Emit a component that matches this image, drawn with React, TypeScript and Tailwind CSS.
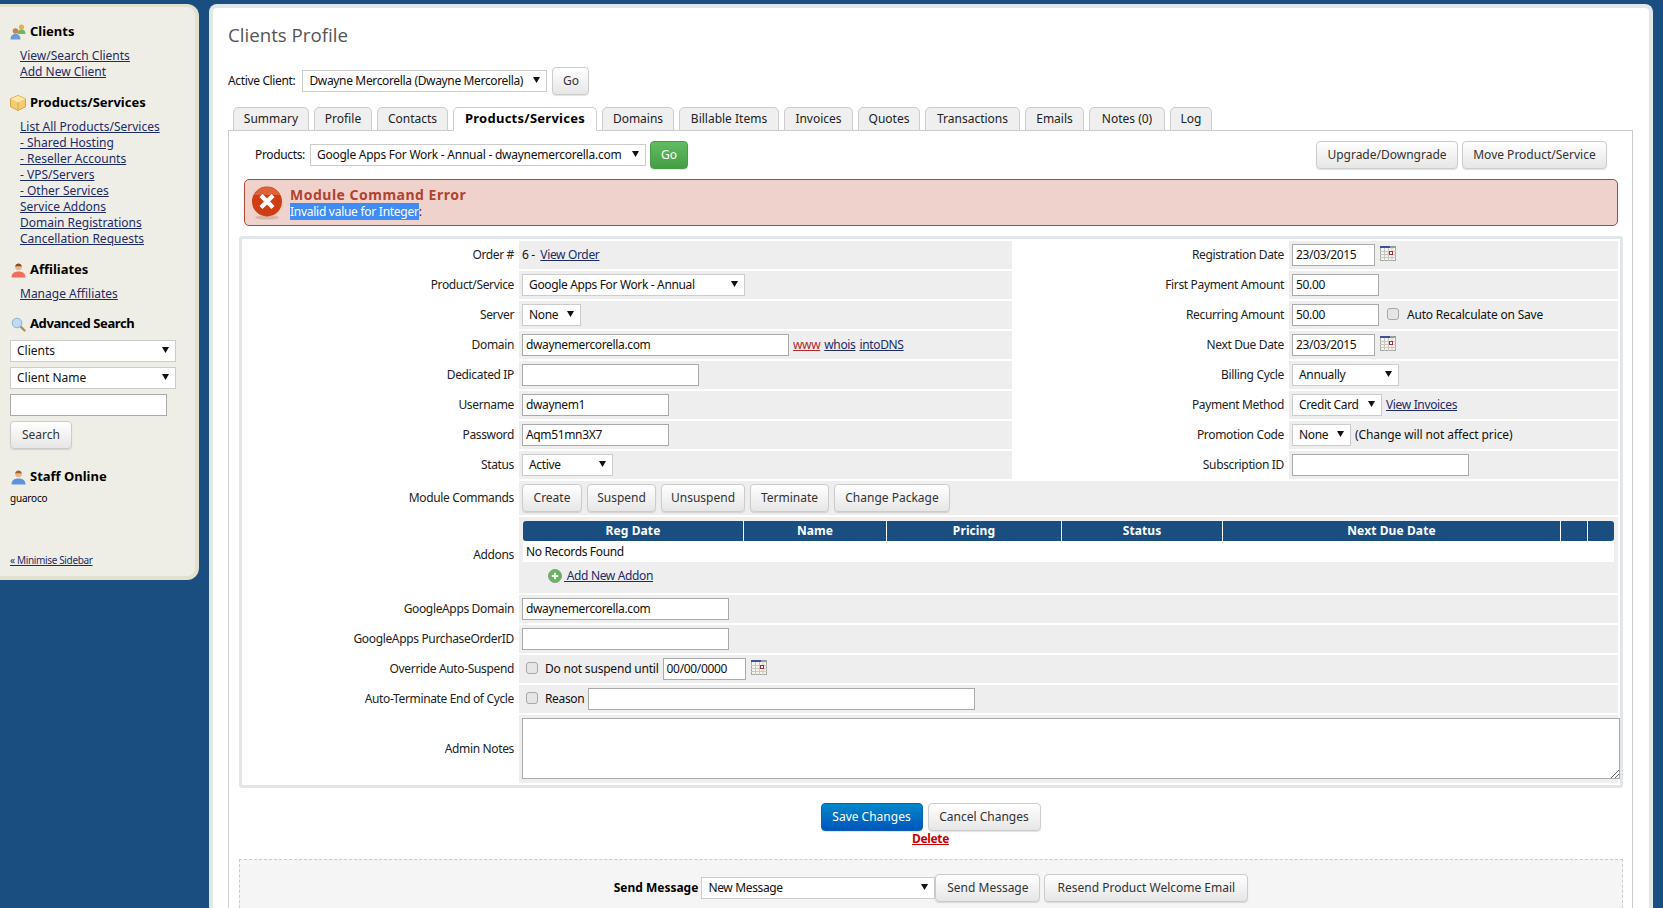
import type { ReactNode } from "react";

const LINK = "text-[#1d2b66] underline";

function Btn({ children, w, variant = "plain" }: { children: ReactNode; w: string; variant?: "plain" | "green" | "blue" }) {
  const look =
    variant === "green"
      ? "border-[#4a9a4a] bg-gradient-to-b from-[#62bd62] to-[#449d44] text-white"
      : variant === "blue"
        ? "border-[#0a5fb0] bg-gradient-to-b from-[#0088cc] to-[#0055bb] text-white"
        : "border-[#cccccc] bg-gradient-to-b from-white to-[#e6e6e6] text-[#333333]";
  return (
    <div className={`flex h-[28px] shrink-0 items-center justify-center rounded-[4px] border tracking-normal shadow-[0_1px_1px_rgba(0,0,0,0.12)] ${look} ${w}`}>
      {children}
    </div>
  );
}

function Sel({ children, w }: { children: ReactNode; w: string }) {
  return (
    <div className={`flex h-[22px] shrink-0 items-center justify-between border border-[#cccccc] bg-white pl-[6px] pr-[6px] ${w}`}>
      <span className="whitespace-nowrap">{children}</span>
      <svg width="7" height="6" viewBox="0 0 7 6" className="-mt-[2px] shrink-0">
        <path d="M0 0h7L3.5 6z" fill="#111" />
      </svg>
    </div>
  );
}

function Inp({ value = "", w }: { value?: string; w: string }) {
  return (
    <div className={`flex h-[22px] shrink-0 items-center border border-[#aaaaaa] bg-white px-[3px] ${w}`}>{value}</div>
  );
}

function Check({ className = "" }: { className?: string }) {
  return <div className={`-mt-[3px] h-[12px] w-[12px] shrink-0 rounded-[3px] border border-[#a8a8a8] bg-[#e6e6e6] ${className}`} />;
}

function Calendar() {
  return (
    <svg width="16" height="15" viewBox="0 0 16 15" className="-mt-[4px] ml-[1px] shrink-0">
      <rect x="0.5" y="0.5" width="15" height="14" fill="#f4f4ee" stroke="#a8a8a0" />
      <rect x="0" y="0" width="16" height="2" fill="#9a9a9a" />
      <rect x="0" y="0" width="10" height="2" fill="#3f4f9c" />
      <path d="M0 5.5h16M0 8.5h16M0 11.5h16M4.5 2v13M8.5 2v13M12 2v13" stroke="#c8c8c2" />
      <rect x="9.5" y="5.5" width="3" height="3" fill="#fff" stroke="#a82a3a" />
    </svg>
  );
}

function ClientsIcon() {
  return (
    <svg width="17" height="16" viewBox="0 0 17 16" className="shrink-0">
      <circle cx="11.5" cy="3" r="2.6" fill="#e8b04c" />
      <path d="M7.5 10c0-3 1.5-4.4 4-4.4s4 1.4 4 4.4z" fill="#6cb85a" />
      <circle cx="5.5" cy="7" r="2.8" fill="#c9824e" />
      <path d="M0.5 15.5c0-4 2-5.6 5-5.6s5 1.6 5 5.6z" fill="#6a9ad8" />
    </svg>
  );
}

function BoxIcon() {
  return (
    <svg width="16" height="16" viewBox="0 0 16 16" className="shrink-0">
      <path d="M8 .5l7.5 3.2v8L8 15.5.5 11.7v-8z" fill="#f3cd73" stroke="#d9a440" />
      <path d="M.8 3.8L8 7.4l7.2-3.6L8 .8z" fill="#fbe6a8" />
      <path d="M8 7.4v8" stroke="#d9a440" />
    </svg>
  );
}

function PersonIcon({ shirt, hair }: { shirt: string; hair: string }) {
  return (
    <svg width="15" height="15" viewBox="0 0 15 15" className="shrink-0">
      <circle cx="7.5" cy="4" r="3.3" fill="#e9b48c" />
      <path d="M4.2 3.6C4.4 1.4 6 .5 7.5.5s3.1.9 3.3 3.1C9 3 6 3 4.2 3.6z" fill={hair} />
      <path d="M.5 14.5c0-4 2.6-6 7-6s7 2 7 6z" fill={shirt} />
    </svg>
  );
}

function SearchIcon() {
  return (
    <svg width="15" height="15" viewBox="0 0 15 15" className="shrink-0">
      <path d="M9.5 9.5l4 4" stroke="#b88a55" strokeWidth="2.4" strokeLinecap="round" />
      <circle cx="6" cy="6" r="4.8" fill="#bcdcf5" stroke="#8fb0cf" />
    </svg>
  );
}

function ErrorIcon() {
  return (
    <svg width="32" height="34" viewBox="0 0 32 34" className="shrink-0">
      <ellipse cx="16" cy="31.5" rx="12" ry="2" fill="#d9b3aa" />
      <circle cx="16" cy="15.5" r="15" fill="#cf3d12" />
      <path d="M16 1a15 15 0 0 1 13 8H3a15 15 0 0 1 13-8z" fill="#e0623a" />
      <path d="M10 9.5l12 12M22 9.5l-12 12" stroke="#fff" strokeWidth="4.4" />
    </svg>
  );
}

function PlusIcon() {
  return (
    <svg width="14" height="14" viewBox="0 0 14 14" className="shrink-0">
      <circle cx="7" cy="7" r="6.5" fill="#62b85a" stroke="#8a9a88" />
      <path d="M7 3.8v6.4M3.8 7h6.4" stroke="#fff" strokeWidth="2" />
    </svg>
  );
}

function SideHead({ icon, children, className }: { icon: ReactNode; children: ReactNode; className: string }) {
  return (
    <div className={`flex h-[16px] items-center gap-[4px] text-[13px] font-bold text-black ${className}`}>
      <div className="flex w-[16px] justify-center">{icon}</div>
      {children}
    </div>
  );
}

function SideLinks({ items }: { items: string[] }) {
  return (
    <div className="mt-[8px] flex flex-col pl-[10px] text-[12px] leading-[16px]">
      {items.map((t) => (
        <div key={t}>
          <span className={LINK}>{t}</span>
        </div>
      ))}
    </div>
  );
}

function Sidebar() {
  return (
    <aside className="mt-[4px] flex h-[576px] w-[199px] shrink-0 flex-col rounded-r-[12px] border-t-[3px] border-r-[4px] border-b-[4px] border-[#e3e0d0] bg-[#efeee6] pl-[10px] pt-[17px]">
      <SideHead icon={<ClientsIcon />} className="">Clients</SideHead>
      <SideLinks items={["View/Search Clients", "Add New Client"]} />
      <SideHead icon={<BoxIcon />} className="mt-[15px]">Products/Services</SideHead>
      <SideLinks
        items={[
          "List All Products/Services",
          "- Shared Hosting",
          "- Reseller Accounts",
          "- VPS/Servers",
          "- Other Services",
          "Service Addons",
          "Domain Registrations",
          "Cancellation Requests",
        ]}
      />
      <SideHead icon={<PersonIcon shirt="#ef6f5e" hair="#8a4a24" />} className="mt-[15px]">Affiliates</SideHead>
      <SideLinks items={["Manage Affiliates"]} />
      <SideHead icon={<SearchIcon />} className="mt-[14px] tracking-[-0.4px]">Advanced Search</SideHead>
      <div className="mt-[8px] flex flex-col gap-[5px]">
        <Sel w="w-[166px]">Clients</Sel>
        <Sel w="w-[166px]">Client Name</Sel>
        <Inp w="w-[157px]" />
      </div>
      <div className="mt-[5px]">
        <Btn w="w-[62px]">Search</Btn>
      </div>
      <SideHead icon={<PersonIcon shirt="#5a94dc" hair="#a0622e" />} className="mt-[20px]">Staff Online</SideHead>
      <div className="mt-[6px] text-[10px] leading-[14px] tracking-[-0.2px] text-black">guaroco</div>
      <div className="mt-[48px] text-[10px] leading-[14px] tracking-[-0.35px]">
        <span className={LINK}>« Minimise Sidebar</span>
      </div>
    </aside>
  );
}

function Tab({ children, w, active }: { children: ReactNode; w: string; active?: boolean }) {
  return (
    <div
      className={`flex h-[24px] items-center justify-center rounded-t-[5px] border border-[#cccccc] ${w} ${
        active ? "border-b-white bg-white text-[13px] font-bold tracking-[0.25px] text-black" : "bg-[#efefef] text-[#222222]"
      }`}
    >
      {children}
    </div>
  );
}

function Label({ children }: { children: ReactNode }) {
  return <div className="flex items-center justify-end whitespace-nowrap pr-[3px] text-[#222222]">{children}</div>;
}

function Field({ children }: { children: ReactNode }) {
  return <div className="flex h-[28px] items-center gap-[4px] bg-[#eeeeee] pl-[3px]">{children}</div>;
}

function Row({ l, lf, r, rf }: { l: string; lf: ReactNode; r: string; rf: ReactNode }) {
  return (
    <div className="grid grid-cols-[275px_493px_273px_329px] gap-x-[2px]">
      <Label>{l}</Label>
      <Field>{lf}</Field>
      <Label>{r}</Label>
      <Field>{rf}</Field>
    </div>
  );
}

function WideRow({ l, children }: { l: string; children: ReactNode }) {
  return (
    <div className="grid grid-cols-[275px_1099px] gap-x-[2px]">
      <Label>{l}</Label>
      {children}
    </div>
  );
}

const addonCols = [
  { t: "Reg Date", w: "w-[221px]" },
  { t: "Name", w: "w-[143px]" },
  { t: "Pricing", w: "w-[175px]" },
  { t: "Status", w: "w-[161px]" },
  { t: "Next Due Date", w: "w-[338px]" },
  { t: "", w: "w-[27px]" },
  { t: "", w: "w-[26px]" },
];

const tabs = [
  { t: "Summary", w: "w-[76px]" },
  { t: "Profile", w: "w-[58px]" },
  { t: "Contacts", w: "w-[71px]" },
  { t: "Products/Services", w: "w-[144px]", active: true },
  { t: "Domains", w: "w-[72px]" },
  { t: "Billable Items", w: "w-[100px]" },
  { t: "Invoices", w: "w-[69px]" },
  { t: "Quotes", w: "w-[62px]" },
  { t: "Transactions", w: "w-[95px]" },
  { t: "Emails", w: "w-[59px]" },
  { t: "Notes (0)", w: "w-[76px]" },
  { t: "Log", w: "w-[42px]" },
];

export default function App() {
  return (
    <div className="flex h-screen overflow-hidden bg-[#1a4d80] font-['Noto_Sans',sans-serif] text-[12px] text-[#111111]">
      <Sidebar />
      <main className="ml-[10px] mr-[10px] mt-[4px] min-w-0 flex-1 rounded-t-[8px] border-x-[4px] border-t-[4px] border-[#e1e6ea] bg-white pl-[15px] pr-[16px]">
        <h1 className="mt-[15px] h-[24px] font-['Open_Sans',sans-serif] text-[18.7px] leading-[24px] text-[#555555]">Clients Profile</h1>
        <div className="mt-[20px] flex h-[28px] items-center tracking-[-0.35px]">
          <span className="mr-[7px]">Active Client:</span>
          <Sel w="w-[245px]">Dwayne Mercorella (Dwayne Mercorella)</Sel>
          <div className="ml-[5px]">
            <Btn w="w-[37px]">Go</Btn>
          </div>
        </div>
        <div className="mt-[12px] flex gap-[5px] pl-[5px]">
          {tabs.map((t) => (
            <Tab key={t.t} w={t.w} active={t.active}>
              {t.t}
            </Tab>
          ))}
        </div>
        <section className="-mt-px border border-[#cccccc] pb-[20px] pt-[10px] tracking-[-0.35px]">
          <div className="flex h-[28px] items-center justify-between pl-[26px] pr-[25px]">
            <div className="flex items-center">
              <span className="mr-[5px]">Products:</span>
              <div className="tracking-[-0.25px]">
                <Sel w="w-[336px]">Google Apps For Work - Annual - dwaynemercorella.com</Sel>
              </div>
              <div className="ml-[4px]">
                <Btn w="w-[38px]" variant="green">Go</Btn>
              </div>
            </div>
            <div className="flex gap-[4px]">
              <Btn w="w-[142px]">Upgrade/Downgrade</Btn>
              <Btn w="w-[145px]">Move Product/Service</Btn>
            </div>
          </div>

          <div className="ml-[15px] mr-[14px] mt-[10px] flex h-[47px] items-center rounded-[5px] border border-[#b04a35] bg-[#f0d2cd] pl-[6px]">
            <ErrorIcon />
            <div className="ml-[7px] mt-[-1px]">
              <div className="text-[14px] font-bold leading-[19px] tracking-[0.5px] text-[#b0432f]">Module Command Error</div>
              <div className="leading-[15px] tracking-[-0.27px] text-[#1d2b66]">
                <span className="bg-[#3f8cf5] text-white">Invalid value for Integer</span>:
              </div>
            </div>
          </div>

          <div className="ml-[10px] mr-[9px] mt-[10px] flex flex-col gap-y-[2px] rounded-[3px] border-[3px] border-[#e1e6ea] pb-[2px] pr-[2px] pt-[2px]">
            <Row
              l="Order #"
              lf={
                <span className="whitespace-pre">
                  6 -  <span className={LINK}>View Order</span>
                </span>
              }
              r="Registration Date"
              rf={
                <>
                  <Inp value="23/03/2015" w="w-[83px]" />
                  <Calendar />
                </>
              }
            />
            <Row
              l="Product/Service"
              lf={<Sel w="w-[223px]">Google Apps For Work - Annual</Sel>}
              r="First Payment Amount"
              rf={<Inp value="50.00" w="w-[87px]" />}
            />
            <Row
              l="Server"
              lf={<Sel w="w-[59px]">None</Sel>}
              r="Recurring Amount"
              rf={
                <>
                  <Inp value="50.00" w="w-[87px]" />
                  <Check className="ml-[4px]" />
                  <span className="ml-[4px] tracking-[-0.2px]">Auto Recalculate on Save</span>
                </>
              }
            />
            <Row
              l="Domain"
              lf={
                <>
                  <Inp value="dwaynemercorella.com" w="w-[267px]" />
                  <span className="text-[#b02a2a] underline">www</span>
                  <span className={LINK}>whois</span>
                  <span className={LINK}>intoDNS</span>
                </>
              }
              r="Next Due Date"
              rf={
                <>
                  <Inp value="23/03/2015" w="w-[83px]" />
                  <Calendar />
                </>
              }
            />
            <Row l="Dedicated IP" lf={<Inp w="w-[177px]" />} r="Billing Cycle" rf={<Sel w="w-[107px]">Annually</Sel>} />
            <Row
              l="Username"
              lf={<Inp value="dwaynem1" w="w-[147px]" />}
              r="Payment Method"
              rf={
                <>
                  <Sel w="w-[90px]">Credit Card</Sel>
                  <span className={LINK}>View Invoices</span>
                </>
              }
            />
            <Row
              l="Password"
              lf={<Inp value="Aqm51mn3X7" w="w-[147px]" />}
              r="Promotion Code"
              rf={
                <>
                  <Sel w="w-[59px]">None</Sel>
                  <span className="tracking-[-0.1px]">(Change will not affect price)</span>
                </>
              }
            />
            <Row l="Status" lf={<Sel w="w-[91px]">Active</Sel>} r="Subscription ID" rf={<Inp w="w-[177px]" />} />

            <WideRow l="Module Commands">
              <div className="flex h-[34px] items-center gap-[5px] bg-[#eeeeee] pl-[3px]">
                <Btn w="w-[60px]">Create</Btn>
                <Btn w="w-[69px]">Suspend</Btn>
                <Btn w="w-[84px]">Unsuspend</Btn>
                <Btn w="w-[79px]">Terminate</Btn>
                <Btn w="w-[116px]">Change Package</Btn>
              </div>
            </WideRow>
            <WideRow l="Addons">
              <div className="h-[76px] bg-[#eeeeee] pl-[4px] pt-[4px]">
                <div className="flex h-[20px] w-[1091px] overflow-hidden rounded-[3px]">
                  {addonCols.map((c, i) => (
                    <div
                      key={i}
                      className={`flex items-center justify-center border-r border-white bg-[#1a4d80] font-bold tracking-[0.1px] text-white last:border-r-0 ${c.w}`}
                    >
                      {c.t}
                    </div>
                  ))}
                </div>
                <div className="flex h-[21px] w-[1091px] items-center bg-white pl-[3px]">No Records Found</div>
                <div className="ml-[25px] mt-[5px] flex items-center">
                  <PlusIcon />
                  <span className={`${LINK} ml-[2px] whitespace-pre`}> Add New Addon</span>
                </div>
              </div>
            </WideRow>
            <WideRow l="GoogleApps Domain">
              <Field>
                <Inp value="dwaynemercorella.com" w="w-[207px]" />
              </Field>
            </WideRow>
            <WideRow l="GoogleApps PurchaseOrderID">
              <Field>
                <Inp w="w-[207px]" />
              </Field>
            </WideRow>
            <WideRow l="Override Auto-Suspend">
              <Field>
                <Check className="ml-[4px]" />
                <span className="ml-[3px] tracking-[-0.2px]">Do not suspend until</span>
                <Inp value="00/00/0000" w="w-[83px]" />
                <Calendar />
              </Field>
            </WideRow>
            <WideRow l="Auto-Terminate End of Cycle">
              <Field>
                <Check className="ml-[4px]" />
                <span className="ml-[3px]">Reason</span>
                <Inp w="w-[387px]" />
              </Field>
            </WideRow>
            <WideRow l="Admin Notes">
              <div className="h-[68px] bg-[#eeeeee] pl-[3px] pt-[3px]">
                <div className="relative h-[61px] w-[1098px] border border-[#aaaaaa] bg-white">
                  <svg width="9" height="9" viewBox="0 0 9 9" className="absolute bottom-0 right-0">
                    <path d="M1 9l8-8M5 9l4-4" stroke="#666" />
                  </svg>
                </div>
              </div>
            </WideRow>
          </div>

          <div className="mt-[15px] flex justify-center gap-[5px]">
            <Btn w="w-[102px]" variant="blue">Save Changes</Btn>
            <Btn w="w-[113px]">Cancel Changes</Btn>
          </div>
          <div className="text-center font-bold leading-[16px] text-[#cc0000] underline">Delete</div>

          <div className="ml-[10px] mr-[9px] mt-[12px] flex h-[80px] items-start justify-center border border-dashed border-[#cccccc] bg-[#f5f5f5] pt-[14px]">
            <div className="flex h-[28px] items-center">
              <span className="mr-[3px] font-bold tracking-normal text-black">Send Message</span>
              <Sel w="w-[234px]">New Message</Sel>
              <Btn w="w-[105px]">Send Message</Btn>
              <div className="ml-[4px]">
                <Btn w="w-[204px]">Resend Product Welcome Email</Btn>
              </div>
            </div>
          </div>
        </section>
      </main>
    </div>
  );
}
